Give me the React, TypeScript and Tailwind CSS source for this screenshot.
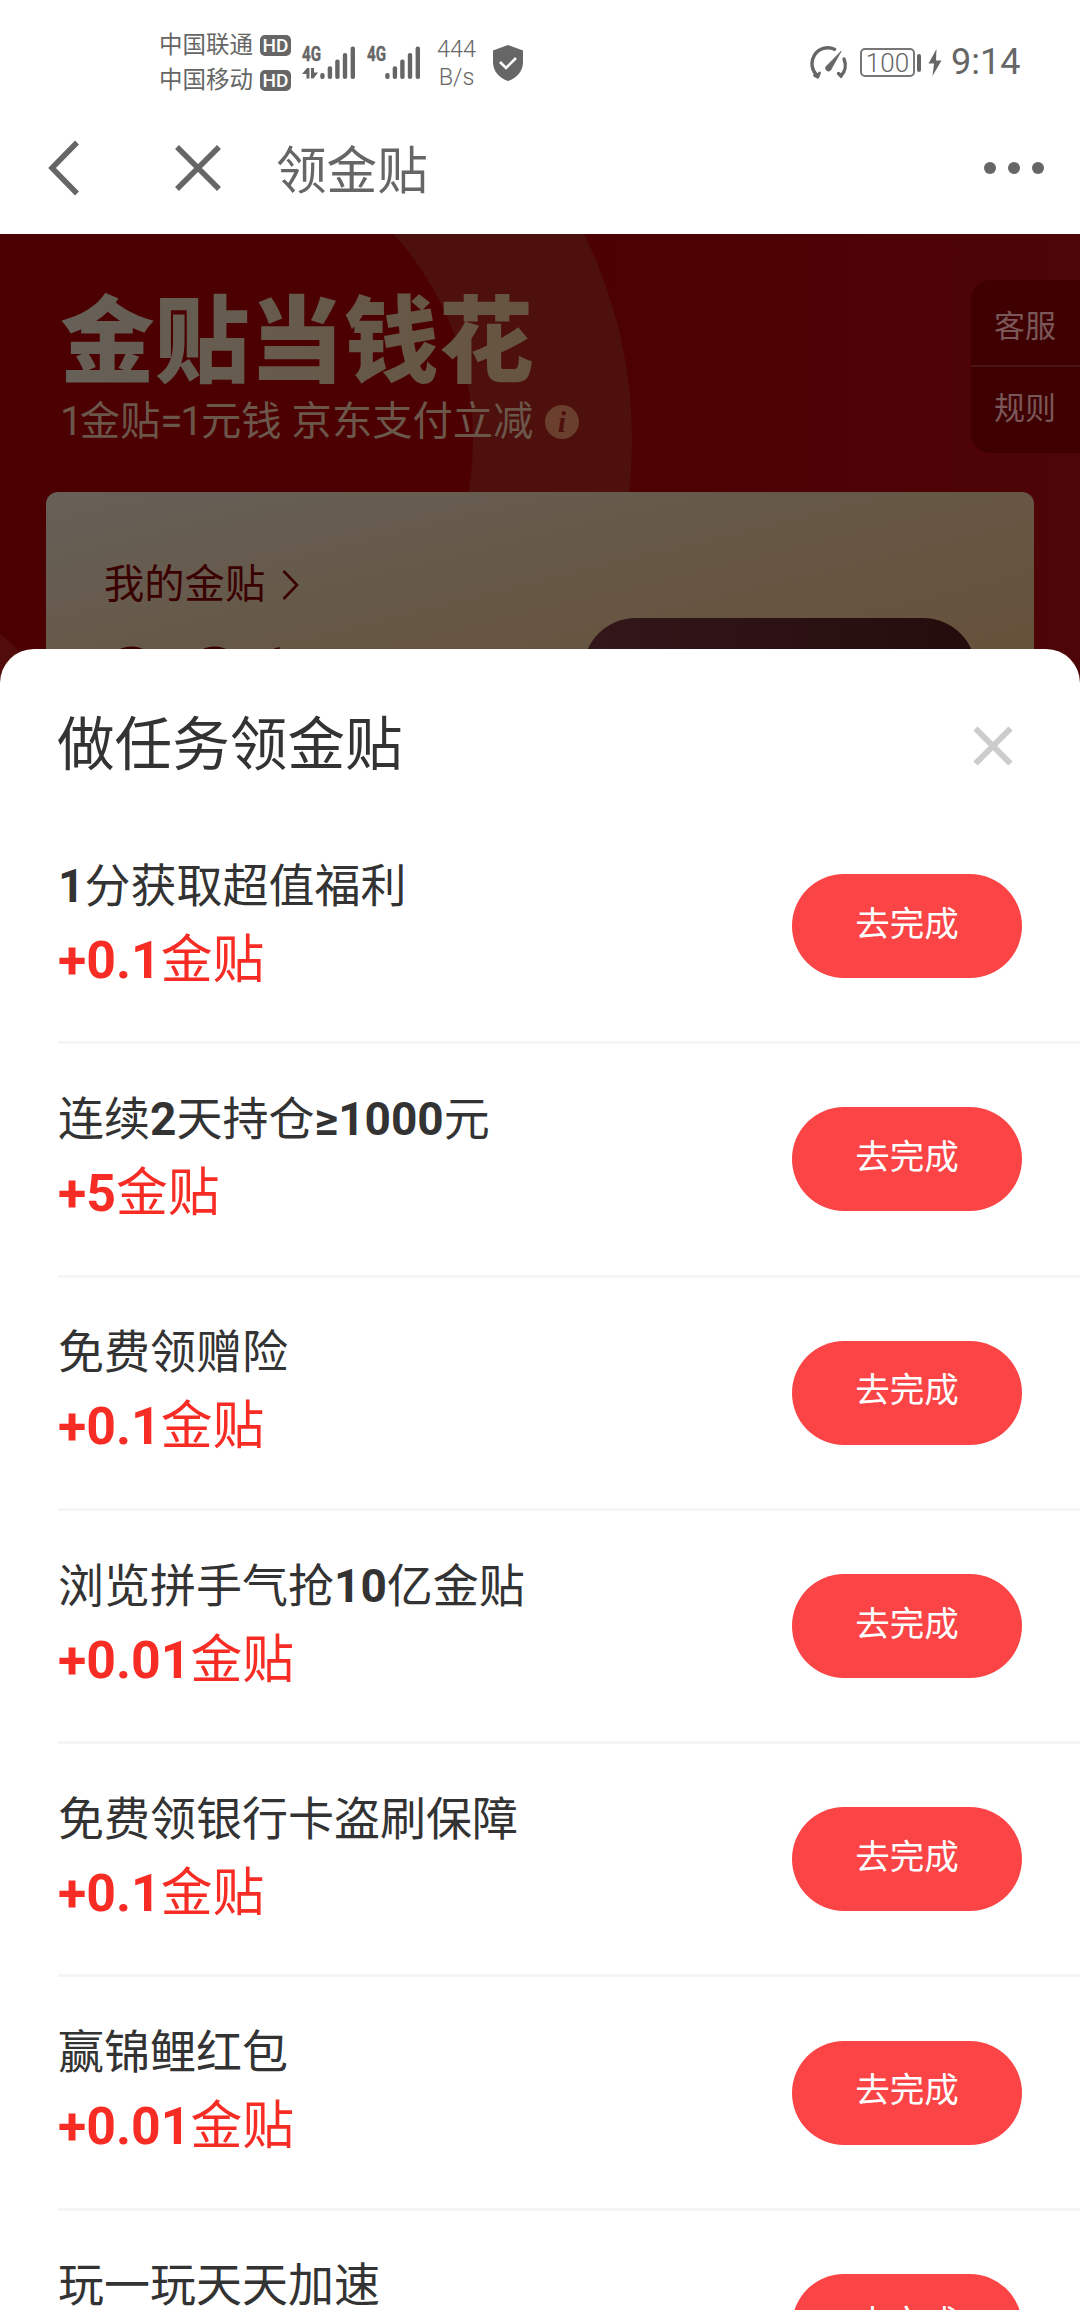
import React from "react";

interface Task {
  title: string;
  reward: string;
}

const tasks: Task[] = [
  { title: "1分获取超值福利", reward: "+0.1金贴" },
  { title: "连续2天持仓≥1000元", reward: "+5金贴" },
  { title: "免费领赠险", reward: "+0.1金贴" },
  { title: "浏览拼手气抢10亿金贴", reward: "+0.01金贴" },
  { title: "免费领银行卡盗刷保障", reward: "+0.1金贴" },
  { title: "赢锦鲤红包", reward: "+0.01金贴" },
  { title: "玩一玩天天加速", reward: "+0.1金贴" },
];

// Digits and symbols are bold, Chinese characters stay regular
function MixedText({ text }: { text: string }) {
  const parts = text.split(/([0-9+.≥]+)/).filter(Boolean);
  return (
    <>
      {parts.map((part, i) => (
        <span key={i} className={/^[0-9+.≥]/.test(part) ? "font-bold" : "font-normal"}>
          {part}
        </span>
      ))}
    </>
  );
}

function Operator({ name }: { name: string }) {
  return (
    <div className="flex items-center h-[35px]">
      <span className="w-[101px] text-[23.5px] leading-[35px] whitespace-nowrap">{name}</span>
      <span className="w-[31px] h-[21px] rounded-[5px] bg-[#666] text-white text-[19px] leading-[21px] font-medium text-center">
        HD
      </span>
    </div>
  );
}

function Signal({ arrows }: { arrows?: boolean }) {
  return (
    <svg className="w-[54px] h-[36px] shrink-0 overflow-visible" viewBox="0 0 54 36" fill="#666">
      <text
        x="0"
        y="17"
        fontSize="20.500"
        fontWeight="700"
        textLength="19"
        lengthAdjust="spacingAndGlyphs"
        stroke="#666"
        strokeWidth="0.400"
      >
        4G
      </text>
      {arrows && <path d="M0 30L5 24H7.500V34.500H4.500V30ZM9 24H12V28.500H16L11.500 34.500H9Z" />}
      <rect x="18.200" y="29" width="4.400" height="6" rx="2" />
      <rect x="25.700" y="22.300" width="4.400" height="12.700" rx="2" />
      <rect x="33.200" y="15.500" width="4.400" height="19.500" rx="2" />
      <rect x="40.800" y="9" width="4.400" height="26" rx="2" />
      <rect x="48.600" y="2.500" width="4.400" height="32.500" rx="2" />
    </svg>
  );
}

function StatusBar() {
  return (
    <div className="flex items-center h-[125px] pl-[159px] pr-[59px] text-[#666]">
      <div>
        <Operator name="中国联通" />
        <Operator name="中国移动" />
      </div>
      <div className="flex ml-[11px] mt-[-2px] gap-[11px]">
        <Signal arrows />
        <Signal />
      </div>
      <div className="ml-[15px] w-[41px] text-[23.500px] leading-[28px] font-light text-center">
        <div>444</div>
        <div>B/s</div>
      </div>
      <svg className="ml-[15px] w-[32px] h-[36px]" viewBox="0 0 32 36">
        <path d="M16 0L31 5.500V17C31 26 25 33 16 36C7 33 1 26 1 17V5.500Z" fill="#666" />
        <path d="M8 17L14 23L24 13" fill="none" stroke="#fff" strokeWidth="2.600" />
      </svg>

      <svg className="ml-auto w-[38px] h-[34px]" viewBox="0 0 38 34" fill="none" stroke="#666" strokeLinecap="round">
        <path d="M24.500 3.300A15.800 15.800 0 0 0 8 30" strokeWidth="3.400" />
        <path d="M4.500 29.500L7.500 31L9.500 27" strokeWidth="2.800" />
        <path d="M34 13A15.800 15.800 0 0 1 31 30L28.500 27.500" strokeWidth="3.400" />
        <path d="M31 5.500L21.500 22.500A3 3 0 1 1 17 19.500Z" fill="#666" strokeWidth="0.800" />
      </svg>
      <div className="ml-[12px] w-[55px] h-[29px] border-2 border-[#777] rounded-[5px] text-[26px] leading-[27px] font-light text-center">
        100
      </div>
      <div className="ml-[2px] w-[4px] h-[18px] rounded-[2px] bg-[#666]" />
      <svg className="ml-[7px] w-[14px] h-[27px]" viewBox="0 0 14 27" fill="#666">
        <path d="M8.500 0L0.500 14.500H6L4.500 27L13.500 11.500H8Z" />
      </svg>
      <div className="ml-[9px] w-[70px] text-[36px] leading-[45px] whitespace-nowrap">9:14</div>
    </div>
  );
}

function NavBar() {
  return (
    <div className="flex items-center h-[109px] pl-[48px] pr-[36px] pb-[23px] text-[#666]">
      <svg className="w-[32px] h-[56px]" viewBox="0 0 32 56" fill="none" stroke="#666" strokeWidth="5.500">
        <path d="M29 2.500L4 28L29 53.500" />
      </svg>
      <svg className="ml-[95px] w-[46px] h-[48px]" viewBox="0 0 46 48" fill="none" stroke="#666" strokeWidth="5.500">
        <path d="M2 3L44 45M44 3L2 45" />
      </svg>
      <h1 className="ml-[55px] mt-[7px] text-[50.600px] leading-[60px] font-normal">领金贴</h1>
      <div className="ml-auto flex gap-[12px]">
        <i className="w-[12px] h-[12px] rounded-full bg-[#666]" />
        <i className="w-[12px] h-[12px] rounded-full bg-[#666]" />
        <i className="w-[12px] h-[12px] rounded-full bg-[#666]" />
      </div>
    </div>
  );
}

function Hero() {
  return (
    <div className="relative h-[450px] overflow-hidden bg-linear-to-r from-[#4b0001] via-[#4c0002] to-[#4e0508]">
      <svg className="absolute inset-0 w-full h-full" viewBox="0 0 1080 450">
        <circle cx="166" cy="206" r="386.500" fill="none" stroke="#4e100c" strokeWidth="159" />
        <circle cx="-80" cy="506" r="133" fill="#520c0c" />
      </svg>

      <div className="relative pl-[60px] pt-[54px]">
        <h2 className="w-fit text-[94.700px] leading-[110px] font-black bg-linear-to-r from-[#666058] to-[#66543f] bg-clip-text text-transparent">
          金贴当钱花
        </h2>
        <div className="flex items-center h-[56px] mt-[-4px]">
          <span className="w-[485px] text-[40.300px] leading-[56px] text-[#6b564a] whitespace-nowrap">
            <span className="tracking-[-3px]">1</span>金贴<span className="tracking-[-2px]">=1</span>元钱 京东支付立减
          </span>
          <span className="w-[34px] h-[34px] rounded-full bg-[#6b3f2d] text-[#4e100c] text-[30px] leading-[33px] text-center font-bold italic font-['Liberation_Serif',serif]">
            i
          </span>
        </div>
      </div>

      {/* side entries */}
      <div className="absolute right-0 top-[46px] w-[109px] h-[173px] rounded-l-[20px] bg-[#3e0001] text-[#7a5758] text-[31px]">
        <div className="h-[87px] pl-[23px] pt-[5px] leading-[84px] border-b-2 border-[#4a1516]">客服</div>
        <div className="pl-[23px] leading-[80px] pt-[2px]">规则</div>
      </div>

      <div className="relative mx-[46px] mt-[42px] h-[240px] rounded-t-[12px] bg-linear-to-br from-[#666058] via-[#665643] to-[#664f36] px-[58px] pt-[67px] text-[#3a0000]">
        <div className="flex items-center h-[52px]">
          <span className="text-[40.300px] leading-[52px]">我的金贴</span>
          <svg className="ml-[17px] w-[18px] h-[32px]" viewBox="0 0 18 32" fill="none" stroke="#3a0000" strokeWidth="2.600">
            <path d="M1.500 2L15 16L1.500 30" />
          </svg>
        </div>
        <div className="flex justify-between">
          <span className="text-[96px] leading-[110px] font-bold mt-[17px]">0.01</span>
          <span className="w-[393px] h-[106px] mt-[7px] rounded-full bg-linear-to-r from-[#33171a] to-[#240c0c]" />
        </div>
      </div>
    </div>
  );
}

function TaskRow({ task }: { task: Task }) {
  return (
    <div className="flex items-center justify-between h-[233.300px] ml-[58px] pr-[58px] border-b-3 border-[#f5f5f5]">
      <div className="pb-[6px] whitespace-nowrap">
        <div className="text-[46px] leading-[74px] text-[#333]">
          <MixedText text={task.title} />
        </div>
        <div className="text-[51.800px] leading-[75px] text-[#f72d25]">
          <MixedText text={task.reward} />
        </div>
      </div>
      <button className="w-[230px] h-[104px] rounded-full bg-[#fa4446] text-white text-[34.500px] leading-[48px] pb-[5px]">
        去完成
      </button>
    </div>
  );
}

function TaskSheet() {
  return (
    <div className="relative -mt-[35px] rounded-t-[34px] bg-white">
      <div className="flex items-center justify-between h-[162px] pl-[57px] pr-[67px] pt-[32px]">
        <h3 className="text-[57.600px] leading-[80px] font-normal text-[#333]">做任务领金贴</h3>
        <svg className="w-[40px] h-[40px]" viewBox="0 0 40 40" fill="none" stroke="#ccc" strokeWidth="6">
          <path d="M2.500 2.500L37.500 37.500M37.500 2.500L2.500 37.500" />
        </svg>
      </div>
      {tasks.map((task) => (
        <TaskRow key={task.title} task={task} />
      ))}
    </div>
  );
}

export default function App() {
  return (
    <div className="w-[1080px] h-[2310px] overflow-hidden bg-white font-[Roboto,'Noto_Sans_CJK_SC',sans-serif]">
      <StatusBar />
      <NavBar />
      <Hero />
      <TaskSheet />
    </div>
  );
}
